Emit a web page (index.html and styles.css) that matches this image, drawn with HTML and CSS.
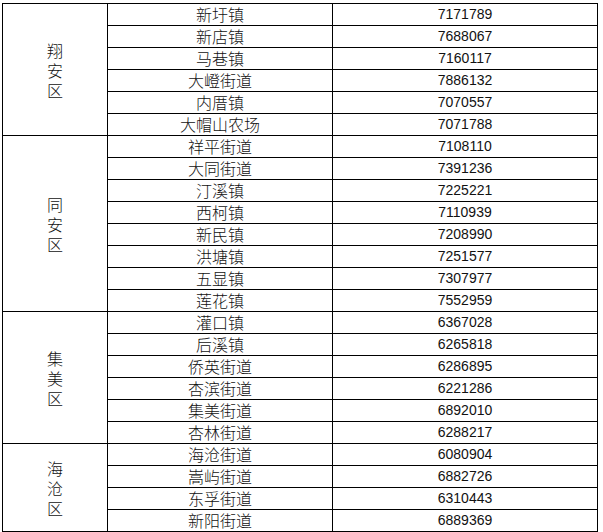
FILE: index.html
```html
<!DOCTYPE html>
<html lang="zh-CN">
<head>
<meta charset="utf-8">
<title>街道镇代码</title>
<link rel="stylesheet" href="styles.css">
</head>
<body>
<div class="page">
<table class="codes">
  <colgroup>
    <col class="c-district">
    <col class="c-town">
    <col class="c-code">
  </colgroup>
  <tbody>
    <tr><td class="district" rowspan="6"><span>翔安区</span></td><td class="town">新圩镇</td><td class="code">7171789</td></tr>
    <tr><td class="town">新店镇</td><td class="code">7688067</td></tr>
    <tr><td class="town">马巷镇</td><td class="code">7160117</td></tr>
    <tr><td class="town">大嶝街道</td><td class="code">7886132</td></tr>
    <tr><td class="town">内厝镇</td><td class="code">7070557</td></tr>
    <tr><td class="town">大帽山农场</td><td class="code">7071788</td></tr>

    <tr><td class="district" rowspan="8"><span>同安区</span></td><td class="town">祥平街道</td><td class="code">7108110</td></tr>
    <tr><td class="town">大同街道</td><td class="code">7391236</td></tr>
    <tr><td class="town">汀溪镇</td><td class="code">7225221</td></tr>
    <tr><td class="town">西柯镇</td><td class="code">7110939</td></tr>
    <tr><td class="town">新民镇</td><td class="code">7208990</td></tr>
    <tr><td class="town">洪塘镇</td><td class="code">7251577</td></tr>
    <tr><td class="town">五显镇</td><td class="code">7307977</td></tr>
    <tr><td class="town">莲花镇</td><td class="code">7552959</td></tr>

    <tr><td class="district" rowspan="6"><span>集美区</span></td><td class="town">灌口镇</td><td class="code">6367028</td></tr>
    <tr><td class="town">后溪镇</td><td class="code">6265818</td></tr>
    <tr><td class="town">侨英街道</td><td class="code">6286895</td></tr>
    <tr><td class="town">杏滨街道</td><td class="code">6221286</td></tr>
    <tr><td class="town">集美街道</td><td class="code">6892010</td></tr>
    <tr><td class="town">杏林街道</td><td class="code">6288217</td></tr>

    <tr><td class="district" rowspan="4"><span>海沧区</span></td><td class="town">海沧街道</td><td class="code">6080904</td></tr>
    <tr><td class="town">嵩屿街道</td><td class="code">6882726</td></tr>
    <tr><td class="town">东孚街道</td><td class="code">6310443</td></tr>
    <tr><td class="town">新阳街道</td><td class="code">6889369</td></tr>
  </tbody>
</table>
</div>
</body>
</html>
```
FILE: styles.css
```css
html, body {
  margin: 0;
  padding: 0;
  background: #fff;
}

.page {
  padding: 3px 0 0 2px;
}

.codes {
  border-collapse: collapse;
  table-layout: fixed;
  width: 595px;
  font-family: "Liberation Sans", "Noto Sans CJK SC", sans-serif;
  color: #111;
}

.c-district { width: 105px; }
.c-town { width: 225px; }
.c-code { width: 265px; }

.codes td {
  border: 1px solid #000;
  padding: 0;
  height: 21px;
  text-align: center;
  vertical-align: middle;
}

.town {
  font-family: "Noto Sans CJK SC", sans-serif;
  font-size: 16px;
  font-weight: 300;
  line-height: 21px;
  padding-top: 1px;
}

.code {
  font-size: 14px;
  line-height: 21px;
}

.district {
  font-family: "Noto Sans CJK SC", sans-serif;
  font-size: 16px;
  font-weight: 300;
  line-height: 20px;
}

.district span {
  display: inline-block;
  width: 16px;
}
```
